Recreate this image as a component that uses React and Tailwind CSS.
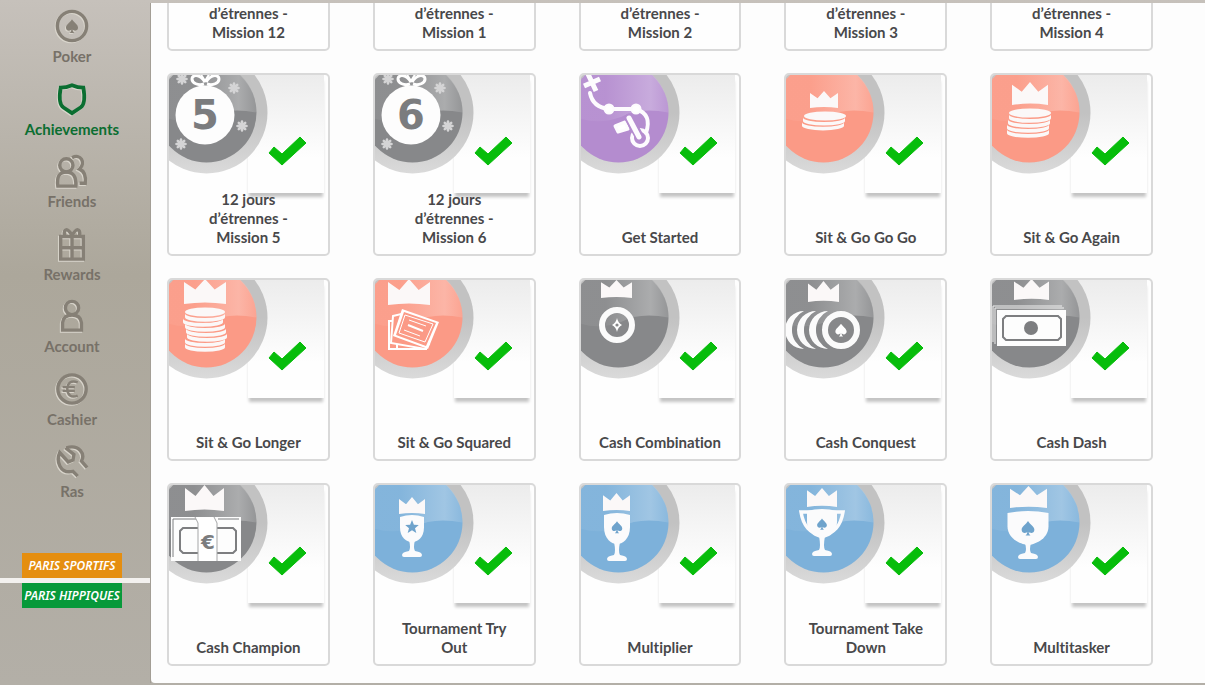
import React, { useState } from 'react';

const SPADE =
  'M12 2C9 7 3 9.5 3 14.5C3 17.5 5.2 19 7.5 19C9 19 10.3 18.4 11 17.3C11 19.5 10 21.5 8.5 22.5H15.5C14 21.5 13 19.5 13 17.3C13.7 18.4 15 19 16.5 19C18.8 19 21 17.5 21 14.5C21 9.5 15 7 12 2Z';

const TONES = {
  gray: { base: '#87888a', light: '#b4b5b6' },
  purple: { base: '#b48ccf', light: '#cdb3e0' },
  salmon: { base: '#fb9a86', light: '#fcbcaf' },
  blue: { base: '#7db1da', light: '#a9cbe6' },
};

const Spade = ({ x, y, size, fill }) => (
  <path d={SPADE} fill={fill} stroke="none" transform={`translate(${x - size / 2} ${y - size / 2}) scale(${size / 24})`} />
);

const Crown = ({ x, y, w, h }) => (
  <path
    d="M0 12L27 42L50 0L73 42L100 12V100Q50 88 0 100Z"
    fill="#fbf8f8"
    transform={`translate(${x} ${y}) scale(${w / 100} ${h / 100})`}
  />
);

// stack of coins seen from the side, shifts moves each coin left or right
const Coins = ({ x, y, rx, step, shifts }) => (
  <g fill="#fbf8f8">
    {shifts.map((s, i) => (
      <path
        key={i}
        d={`M${x - rx + s} ${y + 1.4 + i * step}a${rx} 4.6 0 0 0 ${2 * rx} 0v${step - 1.2}a${rx} 4.6 0 0 1 ${-2 * rx} 0Z`}
      />
    ))}
    <ellipse cx={x} cy={y} rx={rx} ry="4.6" />
  </g>
);

const Snowflake = ({ x, y }) => (
  <g stroke="#d4d4d5" strokeWidth="2.6" strokeLinecap="round" transform={`translate(${x} ${y})`}>
    <path d="M0 -4.5V4.5M-4.5 0H4.5M-3.2 -3.2L3.2 3.2M3.2 -3.2L-3.2 3.2" />
  </g>
);

const GiftBag = ({ number }) => (
  <g>
    <Snowflake x={15} y={6} />
    <Snowflake x={67} y={15} />
    <Snowflake x={75} y={53} />
    <Snowflake x={14} y={71} />
    <g fill="none" stroke="#fff" strokeWidth="3">
      <path d="M38 9C32 0 25 2 25 6S31 13 37 11" />
      <path d="M39 9C45 0 52 2 52 6S46 13 40 11" />
      <path d="M33 0L38 8L43 0" strokeWidth="2" />
    </g>
    <circle cx="38" cy="42" r="29.5" fill="#fdfdfd" />
    <text x="38" y="56" textAnchor="middle" fontFamily="DejaVu Sans" fontWeight="700" fontSize="40" fill="#7b7c7e">
      {number}
    </text>
  </g>
);

const Goblet = ({ x, top, w, bowl, base }) => (
  <g fill="#fbfbfc">
    <path
      d={`M${x - w / 2} ${top + 2}Q${x} ${top - 2} ${x + w / 2} ${top + 2}V${top + bowl * 0.45}C${x + w / 2} ${top + bowl * 0.85} ${x + 5} ${top + bowl} ${x} ${top + bowl}S${x - w / 2} ${top + bowl * 0.85} ${x - w / 2} ${top + bowl * 0.45}Z`}
    />
    <path
      d={`M${x - 3} ${top + bowl - 2}H${x + 3}Q${x + 1} ${base - 9} ${x + 3} ${base - 6}Q${x + 10} ${base - 5} ${x + 10} ${base - 2}Q${x + 10} ${base} ${x + 8} ${base}H${x - 8}Q${x - 10} ${base} ${x - 10} ${base - 2}Q${x - 10} ${base - 5} ${x - 3} ${base - 6}Q${x - 1} ${base - 9} ${x - 3} ${top + bowl - 2}Z`}
    />
  </g>
);

const NoteFrame = ({ x, y, w, h }) => (
  <path
    d={`M${x + 3} ${y}H${x + w - 3}L${x + w} ${y + 3}V${y + h - 3}L${x + w - 3} ${y + h}H${x + 3}L${x} ${y + h - 3}V${y + 3}Z`}
    fill="none"
    stroke="#7d7e80"
    strokeWidth="2"
  />
);

const ART = {
  five: <GiftBag number="5" />,
  six: <GiftBag number="6" />,
  start: (
    <g stroke="#fdfbfe" fill="none" strokeWidth="4" strokeLinecap="round">
      <path d="M5 13L21 6M9 1L17 18" strokeWidth="5" strokeLinecap="butt" />
      <path d="M11 20C13 30 20 35 30 36H57C69 40 71 48 67 60" />
      <circle cx="30" cy="36" r="4.5" fill="#fff" strokeWidth="2" />
      <circle cx="57" cy="36" r="4.5" fill="#fff" strokeWidth="2" />
      <circle cx="61" cy="65" r="8" />
      <path d="M36 53L46 49L49 56L39 59Z" fill="#fff" strokeWidth="3" strokeLinejoin="round" />
      <path d="M50 45L60 63" stroke="#b48ccf" strokeWidth="9" />
      <path d="M50 45L60 64" strokeWidth="5" />
    </g>
  ),
  coins3: (
    <g>
      <Crown x={26} y={18} w={28} h={17} />
      <Coins x={41} y={43} rx={21} step={4.8} shifts={[-1, -2]} />
    </g>
  ),
  coins5: (
    <g>
      <Crown x={22} y={9} w={36} h={23} />
      <Coins x={40} y={40} rx={21} step={5} shifts={[0, -1, -2, -2]} />
    </g>
  ),
  coins8: (
    <g>
      <Crown x={17} y={1} w={42} h={25} />
      <Coins x={38} y={34} rx={20} step={5} shifts={[0, -2, 0, 1, 2, 0, 0]} />
    </g>
  ),
  tickets: (
    <g>
      <Crown x={15} y={1} w={42} h={26} />
      <path d="M16 43L24 43L24 71H54L16 71Z" fill="#fb9a86" stroke="#fff" strokeWidth="2" />
      <path d="M20 38L28 36L56 66L52 71L18 65Z" fill="#fb9a86" stroke="#fff" strokeWidth="2" />
      <path d="M29 31L66 44L55 71L20 58Z" fill="#fff" />
      <path d="M31 34L63 45L53 68L23 57Z" fill="#fb9a86" />
      <path d="M32 37L60 46L52 64L26 55Z" fill="none" stroke="#fff" strokeWidth="1" />
      <path d="M35 47L50 53" stroke="#fff" strokeWidth="2" />
      <path d="M36 42L53 48M31 52L47 58" stroke="#fff" strokeWidth="1" />
    </g>
  ),
  chip: (
    <g>
      <Crown x={22} y={2} w={31} h={18} />
      <circle cx="38" cy="47" r="15" fill="none" stroke="#fbfbfb" strokeWidth="6" />
      <path d="M38 40Q39 45 43 47Q39 49 38 54Q37 49 33 47Q37 45 38 40Z" fill="#fff" />
      <circle cx="38" cy="47" r="1.6" fill="#87888a" />
    </g>
  ),
  chips: (
    <g fill="#fbfbfb">
      <Crown x={24} y={3} w={31} h={21} />
      {[20, 32, 44].map((cx) => (
        <path key={cx} d={`M${cx} 33A19 19 0 0 0 ${cx} 71A21 21 0 0 1 ${cx} 33Z`} />
      ))}
      <circle cx="57" cy="52" r="16" fill="none" stroke="#fbfbfb" strokeWidth="6" />
      <Spade x={57} y={52} size={15} fill="#fff" />
    </g>
  ),
  note: (
    <g>
      <Crown x={24} y={1} w={35} h={21} />
      <path d="M3 64V28H72M5 66V30H74" fill="none" stroke="#f0f0f0" strokeWidth="1" />
      <rect x="7" y="32" width="69" height="36" fill="#fdfdfd" />
      <NoteFrame x={13} y={38} w={58} h={24} />
      <circle cx="41" cy="50" r="7" fill="#7d7e80" />
    </g>
  ),
  bundle: (
    <g>
      <Crown x={18} y={2} w={39} h={26} />
      <rect x="4" y="34" width="70" height="44" fill="#fdfdfd" />
      <path d="M6 74V36H29M51 36H72" fill="none" stroke="#7d7e80" strokeWidth="1" />
      <NoteFrame x={13} y={45} w={56} h={25} />
      <path d="M28 34H47L50 40V78H31V40Z" fill="#fff" />
      <path d="M28 34L31 40V78M47 34L50 40V78" fill="none" stroke="#a5a6a7" strokeWidth="1" />
      <text x="41" y="66" textAnchor="middle" fontFamily="DejaVu Sans" fontWeight="700" fontSize="20" fill="#7b7c7e">
        €
      </text>
    </g>
  ),
  starCup: (
    <g>
      <Crown x={26} y={14} w={26} h={17} />
      <Goblet x={39} top={32} w={24} bowl={27} base={74} />
      <path d="M39 37L40.9 41.7L45.8 42L42 45.2L43.3 50L39 47.3L34.7 50L36 45.2L32.2 42L37.1 41.7Z" fill="#6ea3cc" />
    </g>
  ),
  spadeCup: (
    <g>
      <Crown x={24} y={10} w={27} h={18} />
      <Goblet x={38} top={30} w={26} bowl={31} base={78} />
      <Spade x={38} y={44} size={14} fill="#6ea3cc" />
    </g>
  ),
  handleCup: (
    <g>
      <Crown x={23} y={5} w={30} h={19} />
      <path d="M17 29H59C57 42 50 51 38 52C26 51 19 42 17 29Z" fill="none" stroke="#fbfbfc" strokeWidth="3.5" />
      <Goblet x={38} top={26} w={30} bowl={29} base={73} />
      <Spade x={38} y={41} size={13} fill="#6ea3cc" />
    </g>
  ),
  bigCup: (
    <g>
      <Crown x={20} y={3} w={37} h={22} />
      <Goblet x={38} top={28} w={41} bowl={34} base={76} />
      <Spade x={38} y={45} size={17} fill="#6ea3cc" />
    </g>
  ),
};

const ACHIEVEMENTS = [
  { title: 'd’étrennes -\nMission 12', tone: 'gray' },
  { title: 'd’étrennes -\nMission 1', tone: 'gray' },
  { title: 'd’étrennes -\nMission 2', tone: 'gray' },
  { title: 'd’étrennes -\nMission 3', tone: 'gray' },
  { title: 'd’étrennes -\nMission 4', tone: 'gray' },
  { title: '12 jours\nd’étrennes -\nMission 5', tone: 'gray', art: 'five' },
  { title: '12 jours\nd’étrennes -\nMission 6', tone: 'gray', art: 'six' },
  { title: 'Get Started', tone: 'purple', art: 'start' },
  { title: 'Sit & Go Go Go', tone: 'salmon', art: 'coins3' },
  { title: 'Sit & Go Again', tone: 'salmon', art: 'coins5' },
  { title: 'Sit & Go Longer', tone: 'salmon', art: 'coins8' },
  { title: 'Sit & Go Squared', tone: 'salmon', art: 'tickets' },
  { title: 'Cash Combination', tone: 'gray', art: 'chip' },
  { title: 'Cash Conquest', tone: 'gray', art: 'chips' },
  { title: 'Cash Dash', tone: 'gray', art: 'note' },
  { title: 'Cash Champion', tone: 'gray', art: 'bundle' },
  { title: 'Tournament Try\nOut', tone: 'blue', art: 'starCup' },
  { title: 'Multiplier', tone: 'blue', art: 'spadeCup' },
  { title: 'Tournament Take\nDown', tone: 'blue', art: 'handleCup' },
  { title: 'Multitasker', tone: 'blue', art: 'bigCup' },
];

const Medal = ({ tone, art }) => (
  <svg className="absolute left-0 top-0" width="102" height="102" viewBox="2 2 102 102" aria-hidden="true">
    <circle cx="39.5" cy="39.5" r="61" fill="url(#ring)" />
    <circle cx="39.5" cy="39.5" r="50" fill={TONES[tone].base} />
    <path d="M0 8A50 50 0 0 1 89.5 39.5Q60 34 42 44Q20 52 0 45Z" fill={`url(#gloss-${tone})`} />
    {ART[art]}
  </svg>
);

const AchievementCard = ({ title, tone, art }) => (
  <li className="relative flex h-[183px] flex-col items-center justify-end overflow-hidden rounded-[5px] border-2 border-[#d9d9d9] bg-[#fefefe] px-3 pb-[7px]">
    <div className="absolute right-1 top-0 flex h-[118px] w-[76px] justify-center bg-linear-to-b from-[#ececec] to-[#fefefe] to-70% pl-[2px] pt-[61px] shadow-[0_5px_3px_-1px_#c4c4c4]">
      <svg width="38" height="30" viewBox="0 0 38 30" role="img" aria-label="Completed">
        <path d="M1 17L6 11L14 18L32 1L38 7L14 29Z" fill="#07bd0b" stroke="#07bd0b" strokeLinejoin="round" />
      </svg>
    </div>
    <Medal tone={tone} art={art} />
    <h3 className="relative whitespace-pre-line text-center text-[15px] font-bold leading-[19px] text-[#48484a]">{title}</h3>
  </li>
);

const NAV = [
  {
    label: 'Poker',
    icon: (
      <>
        <circle cx="17" cy="17" r="15.5" />
        <Spade x={17} y={17} size={17} fill="currentColor" />
      </>
    ),
  },
  { label: 'Achievements', icon: <path d="M17 2.5Q23 5 29 5Q32 22 26 26L17 32L8 26Q2 22 5 5Q11 5 17 2.5Z" strokeWidth="4" /> },
  {
    label: 'Friends',
    icon: (
      <>
        <path d="M17 3C26 -2 32 8 25 15C30 17 32 21 31 30H25" />
        <circle cx="11" cy="11" r="7" />
        <path d="M2 33Q0 18 11 18Q22 18 21 33Z" />
      </>
    ),
  },
  {
    label: 'Rewards',
    icon: (
      <>
        <path d="M5 9H29V33H5ZM5 21H29M17 9V33" />
        <path d="M17 8C12 -1 8 1 9 8M17 8C22 -1 26 1 25 8" />
      </>
    ),
  },
  {
    label: 'Account',
    icon: (
      <>
        <circle cx="17" cy="8.5" r="7" />
        <path d="M7 32V24Q8 16 17 16Q26 16 27 24V32Z" />
      </>
    ),
  },
  {
    label: 'Cashier',
    icon: (
      <>
        <circle cx="17" cy="17" r="15" />
        <path d="M23 10C16 7 12 11 12 17S16 27 23 24M7 15H20M7 19H20" strokeWidth="2.6" />
      </>
    ),
  },
  {
    label: 'Ras',
    icon: <path d="M11 3C25 -1 31 10 27 17L33 24M23 33L18 28C4 31 0 17 4 8L13 18L18 16L19 10L10 3" />,
  },
];

const Sidebar = () => {
  const [active, setActive] = useState('Achievements');

  return (
    <aside className="w-[151px] shrink-0 border-r border-[#a39e95]">
      <nav className="pt-[6px]">
        <ul className="flex h-[492px] flex-col justify-between">
          {NAV.map(({ label, icon }) => (
            <li key={label}>
              <a
                href="#"
                onClick={() => setActive(label)}
                className={`flex flex-col items-center gap-[3px] pr-[6px] text-[15px] font-bold leading-5 ${
                  active === label ? 'text-[#0b6e31]' : 'text-[#777168]'
                }`}
              >
                <svg
                  className={`drop-shadow-[-1px_1px_0_#d9d5cc] ${active === label ? 'text-[#0b6e31]' : 'text-[#868076]'}`}
                  width="34"
                  height="34"
                  viewBox="-1 -1 36 36"
                  fill="none"
                  stroke="currentColor"
                  strokeWidth="3.6"
                  aria-hidden="true"
                >
                  {icon}
                </svg>
                {label}
              </a>
            </li>
          ))}
        </ul>
      </nav>
      <div className="mt-[52px] flex flex-col items-center font-['Noto_Sans'] text-[12px] font-semibold italic text-white">
        <button className="mr-[6px] h-[25px] w-[100px] whitespace-nowrap bg-[#e58e10]">PARIS SPORTIFS</button>
        <div className="h-[5px] w-full bg-[#f3f1ef]" />
        <button className="mr-[6px] h-[25px] w-[100px] whitespace-nowrap bg-[#07993a]">PARIS HIPPIQUES</button>
      </div>
    </aside>
  );
};

const Gradients = () => (
  <svg className="absolute" width="0" height="0" aria-hidden="true">
    <defs>
      <linearGradient id="ring" x1="0" y1="0" x2="0" y2="1">
        <stop offset="0.5" stopColor="#c2c2c2" />
        <stop offset="1" stopColor="#dadada" />
      </linearGradient>
      {Object.entries(TONES).map(([name, tone]) => (
        <linearGradient key={name} id={`gloss-${name}`}>
          <stop offset="0.3" stopColor={tone.light} stopOpacity="0.15" />
          <stop offset="0.8" stopColor={tone.light} stopOpacity="0.8" />
          <stop offset="1" stopColor={tone.light} stopOpacity="0.3" />
        </linearGradient>
      ))}
    </defs>
  </svg>
);

const App = () => (
  <div className="flex min-h-screen bg-linear-to-b from-[#c6c1bb] via-[#aca79b] via-40% to-[#b3afa7] pb-[2px] pt-[3px] font-['Lato',sans-serif] [font-variant-ligatures:none]">
    <Gradients />
    <Sidebar />
    <main className="min-w-0 flex-1 overflow-hidden rounded-bl-[4px] bg-[#fdfdfd]">
      {/* list is scrolled past most of its first row */}
      <ul className="-mt-[135px] grid grid-cols-5 gap-x-[43px] gap-y-[22px] pb-[17px] pl-4 pr-[52px]">
        {ACHIEVEMENTS.map((item) => (
          <AchievementCard key={item.title} {...item} />
        ))}
      </ul>
    </main>
  </div>
);

export default App;
